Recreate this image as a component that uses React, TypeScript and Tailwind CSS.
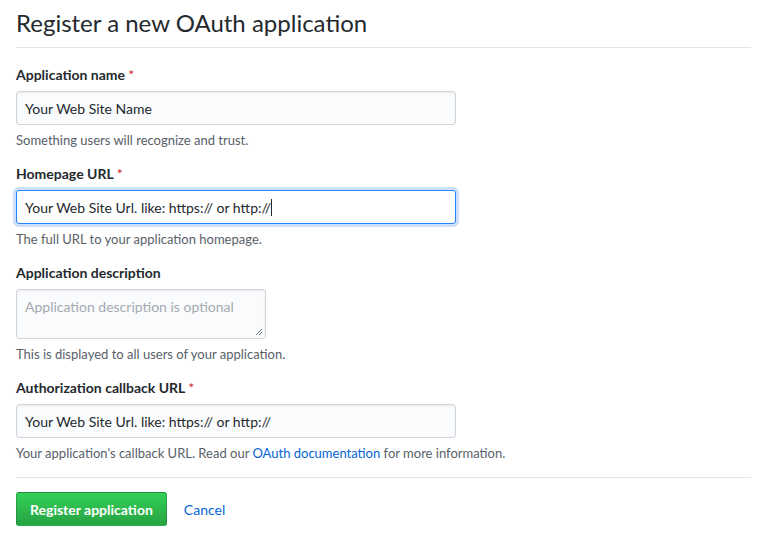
export default function App() {
    const font = { fontFamily: 'Lato, "Noto Sans", sans-serif' };

    return (
        <div className="min-h-screen bg-white text-[#24292e] px-4 pt-[5px]" style={font}>
            {/* Header */}
            <h1 className="text-[24px] leading-[36px] font-normal pb-[6px] border-b border-[#e1e4e8] w-[735px]">
                Register a new OAuth application
            </h1>

            <form className="mt-[17px] w-[735px]">
                {/* Application name */}
                <div className="mb-[15px]">
                    <label className="block text-[14px] font-bold leading-[20px] mb-[6px]">
                        Application name <span className="font-normal text-[#cb2431]">*</span>
                    </label>
                    <div className="w-[440px] h-[34px] px-[8px] flex items-center text-[14px] bg-[#fafbfc] border border-[#d1d5da] rounded-[3px] shadow-[inset_0_1px_2px_rgba(27,31,35,0.075)]">
                        Your Web Site Name
                    </div>
                    <p className="text-[13px] text-[#586069] mt-[6px] leading-[18px]">
                        Something users will recognize and trust.
                    </p>
                </div>

                {/* Homepage URL */}
                <div className="mb-[15px]">
                    <label className="block text-[14px] font-bold leading-[20px] mb-[6px]">
                        Homepage URL <span className="font-normal text-[#cb2431]">*</span>
                    </label>
                    <div className="w-[440px] h-[34px] px-[8px] flex items-center text-[14px] bg-white border border-[#2188ff] rounded-[3px] shadow-[0_0_0_3px_rgba(3,102,214,0.2)]">
                        Your Web Site Url. like: https:// or http://
                        <span className="inline-block w-px h-[17px] bg-[#24292e]" />
                    </div>
                    <p className="text-[13px] text-[#586069] mt-[6px] leading-[18px]">
                        The full URL to your application homepage.
                    </p>
                </div>

                {/* Description */}
                <div className="mb-[15px]">
                    <label className="block text-[14px] font-bold leading-[20px] mb-[6px]">
                        Application description
                    </label>
                    <div className="relative w-[250px] h-[50px] px-[8px] pt-[6px] text-[14px] text-[#a3aab1] bg-[#fafbfc] border border-[#d1d5da] rounded-[3px] shadow-[inset_0_1px_2px_rgba(27,31,35,0.075)]">
                        Application description is optional
                        <svg className="absolute right-[2px] bottom-[2px]" width="8" height="8" viewBox="0 0 8 8">
                            <path d="M7 1L1 7M7 4L4 7" stroke="#6a737d" strokeWidth="1" />
                        </svg>
                    </div>
                    <p className="text-[13px] text-[#586069] mt-[6px] leading-[18px]">
                        This is displayed to all users of your application.
                    </p>
                </div>

                {/* Callback URL */}
                <div>
                    <label className="block text-[14px] font-bold leading-[20px] mb-[6px]">
                        Authorization callback URL <span className="font-normal text-[#cb2431]">*</span>
                    </label>
                    <div className="w-[440px] h-[34px] px-[8px] flex items-center text-[14px] bg-[#fafbfc] border border-[#d1d5da] rounded-[3px] shadow-[inset_0_1px_2px_rgba(27,31,35,0.075)]">
                        Your Web Site Url. like: https:// or http://
                    </div>
                    <p className="text-[13px] text-[#586069] mt-[6px] leading-[18px]">
                        Your application's callback URL. Read our{" "}
                        <a className="text-[#0366d6]">OAuth documentation</a> for more information.
                    </p>
                </div>

                <hr className="border-0 border-t border-[#e1e4e8] mt-[15px]" />

                {/* Buttons */}
                <div className="flex items-center mt-[14px]">
                    <button
                        type="button"
                        className="h-[34px] px-[13px] text-[14px] font-bold text-white rounded-[3px] border border-[rgba(27,31,35,0.2)] bg-[linear-gradient(-180deg,#34d058_0%,#28a745_90%)]"
                    >
                        Register application
                    </button>
                    <a className="ml-[17px] text-[14px] text-[#0366d6]">Cancel</a>
                </div>
            </form>
        </div>
    );
}
